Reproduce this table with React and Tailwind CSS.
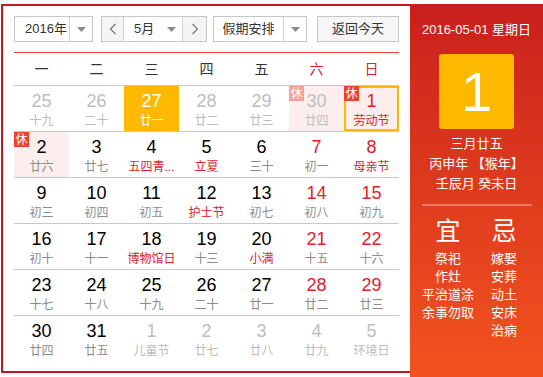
import React from "react";

const G = "g"; // other month
const rows = [
  [
    { d: "25", l: "十九", t: G },
    { d: "26", l: "二十", t: G },
    { d: "27", l: "廿一", t: "sel" },
    { d: "28", l: "廿二", t: G },
    { d: "29", l: "廿三", t: G },
    { d: "30", l: "廿四", t: G, pink: true, badge: "light" },
    { d: "1", l: "劳动节", t: "today", pink: true, badge: "red", numRed: true, fest: true },
  ],
  [
    { d: "2", l: "廿六", pink: true, badge: "red" },
    { d: "3", l: "廿七" },
    { d: "4", l: "五四青...", fest: true },
    { d: "5", l: "立夏", fest: true },
    { d: "6", l: "三十" },
    { d: "7", l: "初一", numRed: true },
    { d: "8", l: "母亲节", numRed: true, fest: true },
  ],
  [
    { d: "9", l: "初三" },
    { d: "10", l: "初四" },
    { d: "11", l: "初五" },
    { d: "12", l: "护士节", fest: true },
    { d: "13", l: "初七" },
    { d: "14", l: "初八", numRed: true },
    { d: "15", l: "初九", numRed: true },
  ],
  [
    { d: "16", l: "初十" },
    { d: "17", l: "十一" },
    { d: "18", l: "博物馆日", fest: true },
    { d: "19", l: "十三" },
    { d: "20", l: "小满", fest: true },
    { d: "21", l: "十五", numRed: true },
    { d: "22", l: "十六", numRed: true },
  ],
  [
    { d: "23", l: "十七" },
    { d: "24", l: "十八" },
    { d: "25", l: "十九" },
    { d: "26", l: "二十" },
    { d: "27", l: "廿一" },
    { d: "28", l: "廿二", numRed: true },
    { d: "29", l: "廿三", numRed: true },
  ],
  [
    { d: "30", l: "廿四" },
    { d: "31", l: "廿五" },
    { d: "1", l: "儿童节", t: G },
    { d: "2", l: "廿七", t: G },
    { d: "3", l: "廿八", t: G },
    { d: "4", l: "廿九", t: G },
    { d: "5", l: "环境日", t: G },
  ],
];

const weekdays = ["一", "二", "三", "四", "五", "六", "日"];

function Arrow() {
  return (
    <svg width="9" height="5" viewBox="0 0 9 5">
      <polygon points="0,0 9,0 4.5,5" fill="#8a8a8a" />
    </svg>
  );
}

function Chevron({ left }) {
  return (
    <svg width="8" height="12" viewBox="0 0 8 12">
      <polyline
        points={left ? "6.5,1 1.5,6 6.5,11" : "1.5,1 6.5,6 1.5,11"}
        fill="none"
        stroke="#777"
        strokeWidth="1.2"
      />
    </svg>
  );
}

function Cell({ c }) {
  const grey = c.t === G;
  const sel = c.t === "sel";
  const today = c.t === "today";
  let numCls = "text-black";
  if (grey) numCls = "text-[#bdbdbd]";
  else if (sel) numCls = "text-white";
  else if (c.numRed) numCls = "text-[#e2202b]";
  let lunCls = "text-[#8c8c8c]";
  if (grey) lunCls = "text-[#bdbdbd]";
  else if (sel) lunCls = "text-white";
  else if (c.fest) lunCls = "text-[#e2202b]";
  let bg = "";
  if (sel) bg = "bg-[#fdb800]";
  else if (c.pink) bg = "bg-[#fdeeee]";
  return (
    <div
      className={`relative h-[45px] flex flex-col items-center ${bg} ${
        today ? "border-2 border-[#fcb900] pt-[3px]" : "pt-[5px]"
      }`}
    >
      {c.badge && (
        <div
          className={`absolute ${today ? "-left-[2px] -top-[2px]" : "left-0 top-0"} w-[15px] h-[15px] flex items-center justify-center text-[12px] leading-none text-white ${
            c.badge === "red" ? "bg-[#f0412f]" : "bg-[#f5a098]"
          }`}
        >
          休
        </div>
      )}
      <div className={`text-[18px] leading-[20px] ${numCls}`}>{c.d}</div>
      <div className={`mt-[2px] text-[12px] leading-[16px] whitespace-nowrap ${lunCls}`}>
        {c.l}
      </div>
    </div>
  );
}

export default function App() {
  return (
    <div
      className="w-[543px] h-[377px] overflow-hidden bg-white"
      style={{ fontFamily: '"Liberation Sans", "Noto Sans CJK SC", sans-serif' }}
    >
      <div className="flex pt-[4px] pl-[1px]">
        <div className="w-[409px] h-[369px] border-2 border-r-0 border-[#c8161e] pl-[11px] pt-[10px]">
          {/* controls */}
          <div className="flex h-[26px] text-[13px] text-[#333] whitespace-nowrap">
            <div className="flex w-[79px] border border-[#c6c6c6] bg-white">
              <div className="w-[55px] pl-[10px] flex items-center border-r border-[#d0d0d0]">
                2016年
              </div>
              <div className="flex-1 flex items-center justify-center">
                <Arrow />
              </div>
            </div>
            <div className="flex ml-[8px] w-[106px] border border-[#c6c6c6]">
              <div className="w-[22px] bg-[#f5f5f5] border-r border-[#d0d0d0] flex items-center justify-center">
                <Chevron left />
              </div>
              <div className="w-[59px] bg-white flex items-center pl-[10px] pr-[6px] justify-between border-r border-[#d0d0d0]">
                <span>5月</span>
                <Arrow />
              </div>
              <div className="flex-1 bg-[#f5f5f5] flex items-center justify-center">
                <Chevron />
              </div>
            </div>
            <div className="flex ml-[6px] w-[94px] border border-[#c6c6c6] bg-white">
              <div className="w-[70px] flex items-center justify-center border-r border-[#d0d0d0]">
                假期安排
              </div>
              <div className="flex-1 flex items-center justify-center">
                <Arrow />
              </div>
            </div>
            <div className="ml-[10px] w-[82px] border border-[#c6c6c6] bg-[#f6f6f6] flex items-center justify-center">
              返回今天
            </div>
          </div>
          <div className="w-[385px] mt-[10px] h-[1px] bg-[#f0412f]" />
          {/* weekday header */}
          <div className="w-[385px] grid grid-cols-7 h-[33px] border-b border-[#c8c8c8] text-[14px]">
            {weekdays.map((w, i) => (
              <div
                key={w}
                className={`flex items-center justify-center ${
                  i >= 5 ? "text-[#e2202b]" : "text-[#333]"
                }`}
              >
                {w}
              </div>
            ))}
          </div>
          {rows.map((r, ri) => (
            <div
              key={ri}
              className={`w-[385px] grid grid-cols-7 ${
                ri < rows.length - 1 ? "border-b border-[#c8c8c8]" : ""
              }`}
            >
              {r.map((c, ci) => (
                <Cell key={ci} c={c} />
              ))}
            </div>
          ))}
        </div>
        {/* right panel */}
        <div className="w-[133px] h-[373px] bg-gradient-to-b from-[#c91f1c] to-[#f3521f] flex flex-col items-center text-white">
          <div className="mt-[17px] text-[13px] leading-[18px] whitespace-nowrap">
            2016-05-01 星期日
          </div>
          <div className="mt-[15px] w-[75px] h-[75px] rounded-[3px] bg-[#fdb900] flex items-center justify-center">
            <span className="text-[56px] leading-none">1</span>
          </div>
          <div className="mt-[5px] text-[13px] leading-[20px] text-center whitespace-nowrap">
            <div>三月廿五</div>
            <div>丙申年 【猴年】</div>
            <div>壬辰月 癸未日</div>
          </div>
          <div className="mt-[10px] w-[110px] h-[2px] bg-[#ee7a66]" />
          <div className="mt-[10px] flex w-full px-[10px]">
            <div className="w-[56px] flex flex-col items-center">
              <div className="text-[25px] leading-[30px]">宜</div>
              <div className="mt-[4px] text-[13px] leading-[18px] text-center whitespace-nowrap">
                <div>祭祀</div>
                <div>作灶</div>
                <div>平治道涂</div>
                <div>余事勿取</div>
              </div>
            </div>
            <div className="w-[56px] flex flex-col items-center">
              <div className="text-[25px] leading-[30px]">忌</div>
              <div className="mt-[4px] text-[13px] leading-[18px] text-center whitespace-nowrap">
                <div>嫁娶</div>
                <div>安葬</div>
                <div>动土</div>
                <div>安床</div>
                <div>治病</div>
              </div>
            </div>
          </div>
        </div>
      </div>
    </div>
  );
}
